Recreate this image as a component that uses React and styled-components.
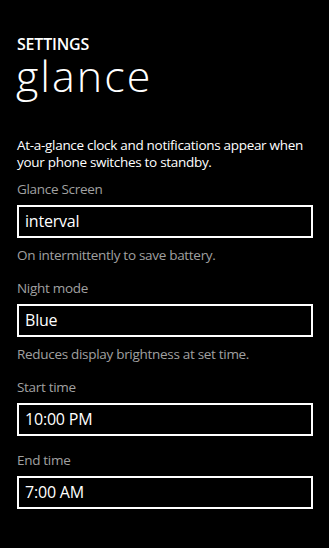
import React from "react";
import styled, { createGlobalStyle } from "styled-components";

const GlobalStyle = createGlobalStyle`
  html, body {
    margin: 0;
    padding: 0;
    background: #000;
  }
  body {
    font-family: "Open Sans", "Noto Sans", sans-serif;
    color: #fff;
  }
`;

const fields = [
  { label: "Glance Screen", value: "interval", hint: "On intermittently to save battery." },
  { label: "Night mode", value: "Blue", hint: "Reduces display brightness at set time." },
  { label: "Start time", value: "10:00 PM" },
  { label: "End time", value: "7:00 AM" },
];

export default function App() {
  return (
    <Page>
      <GlobalStyle />
      <Overline>SETTINGS</Overline>
      <PageTitle>glance</PageTitle>
      <Intro>
        At-a-glance clock and notifications appear when your phone switches to standby.
      </Intro>
      {fields.map((f, i) => (
        <Field key={f.label} $first={i === 0}>
          <Label>{f.label}</Label>
          <Box>{f.value}</Box>
          {f.hint && <Hint>{f.hint}</Hint>}
        </Field>
      ))}
    </Page>
  );
}

const Page = styled.div`
  width: 329px;
  height: 548px;
  box-sizing: border-box;
  padding: 34px 16px 0 17px;
  background: #000;
  overflow: hidden;
`;

const Overline = styled.div`
  font-size: 16px;
  font-weight: 600;
  line-height: 20px;
  letter-spacing: -0.2px;
`;

const PageTitle = styled.h1`
  margin: 0 0 0 -1px;
  font-size: 43px;
  font-weight: 300;
  line-height: 44px;
  letter-spacing: 2px;
`;

const Intro = styled.p`
  margin: 39px 0 0;
  font-size: 13.5px;
  line-height: 17px;
  letter-spacing: -0.3px;
`;

const Field = styled.div`
  display: flex;
  flex-direction: column;
  margin-top: ${(p) => (p.$first ? "10px" : "16px")};
`;

const Label = styled.div`
  font-size: 13.5px;
  line-height: 17px;
  letter-spacing: -0.3px;
  color: #a0a0a0;
`;

const Box = styled.div`
  margin-top: 7px;
  height: 29px;
  border: 2px solid #fff;
  padding: 0 6px;
  font-size: 16px;
  line-height: 29px;
  letter-spacing: -0.2px;
  color: #fff;
`;

const Hint = styled.div`
  margin-top: 9px;
  font-size: 13.5px;
  line-height: 17px;
  letter-spacing: -0.3px;
  color: #a0a0a0;
`;
